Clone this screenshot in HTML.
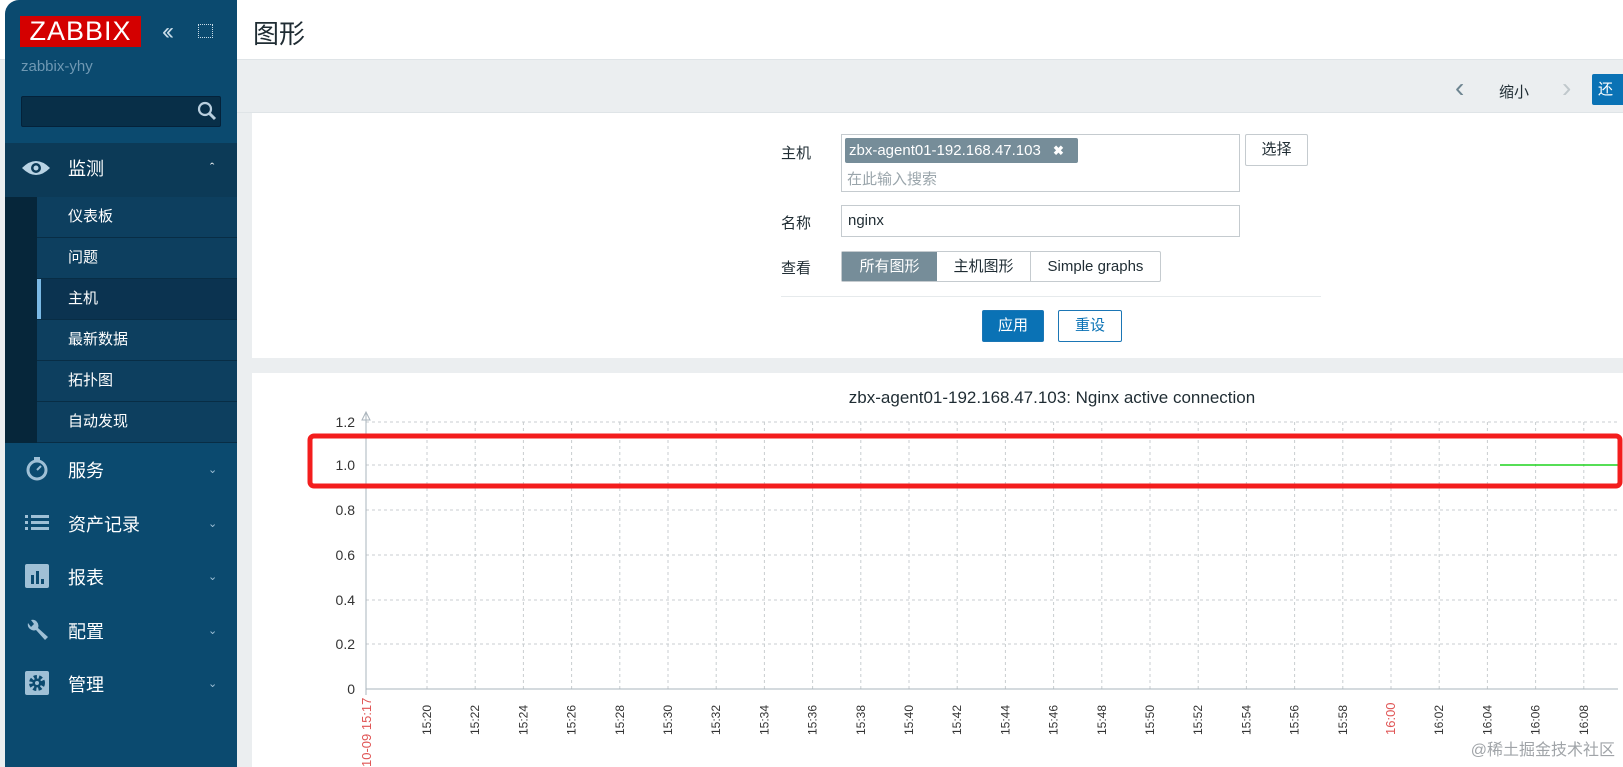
<!DOCTYPE html>
<html><head><meta charset="utf-8"><style>
*{margin:0;padding:0;box-sizing:border-box}
body{width:1623px;height:767px;overflow:hidden;background:#ebeef0;font-family:"Liberation Sans","Noto Sans CJK SC",sans-serif;position:relative;color:#1f2c33}
.a{position:absolute}
#sb{left:5px;top:0;width:232px;height:767px;background:#0b4a6f;border-radius:14px 0 0 0}
.logo{left:20px;top:16px;width:121px;height:31px;background:#d40000;color:#fff;font-size:27px;line-height:31px;text-align:center;letter-spacing:1px}
.sub{left:32px;width:200px;height:41px;background:#0d3f5f;border-bottom:1px solid #082d45;color:#fff;font-size:15px;line-height:40px;padding-left:31px}
.mi{left:68px;color:#fff;font-size:18px}
.chev{left:208px;color:#9fc0d6;font-size:11px}
.lbl{font-size:15px;color:#1f2c33}
.inp{background:#fff;border:1px solid #c5cbcf}
.btn{border:1px solid #1b76b5;border-radius:2px;font-size:15px;text-align:center;line-height:29px}
</style></head><body>
<div class="a" style="left:0;top:0;width:1623px;height:60px;background:#fff;border-bottom:1px solid #dfe4e7"></div>
<div class="a" style="left:253px;top:14px;font-size:26px;color:#1f2c33">图形</div>
<div class="a" style="left:237px;top:112px;width:1386px;height:1px;background:#dfe4e7"></div>
<div class="a" style="left:1455px;top:72px;font-size:28px;color:#6e8591">&#8249;</div>
<div class="a" style="left:1499px;top:81px;font-size:15px">缩小</div>
<div class="a" style="left:1562px;top:72px;font-size:28px;color:#c0c8cc">&#8250;</div>
<div class="a" style="left:1592px;top:74px;width:40px;height:31px;background:#0a72b5;border-radius:2px;color:#fff;font-size:15px;line-height:31px;padding-left:6px">还</div>

<div class="a" style="left:252px;top:113px;width:1371px;height:245px;background:#fff"></div>
<div class="a lbl" style="left:781px;top:142px">主机</div>
<div class="a inp" style="left:841px;top:134px;width:399px;height:58px"></div>
<div class="a" style="left:845px;top:138px;width:233px;height:25px;background:#768d99;border-radius:2px;color:#fff;font-size:15px;line-height:25px;padding-left:4px">zbx-agent01-192.168.47.103 <b style="margin-left:8px;font-size:13px">✖</b></div>
<div class="a" style="left:847px;top:168px;font-size:15px;color:#9aa5ab">在此输入搜索</div>
<div class="a" style="left:1245px;top:134px;width:63px;height:32px;border:1px solid #c5cbcf;border-radius:2px;font-size:15px;text-align:center;line-height:30px">选择</div>
<div class="a lbl" style="left:781px;top:212px">名称</div>
<div class="a inp" style="left:841px;top:205px;width:399px;height:32px;font-size:15px;line-height:30px;padding-left:6px">nginx</div>
<div class="a lbl" style="left:781px;top:257px">查看</div>
<div class="a" style="left:841px;top:251px;width:320px;height:31px;border:1px solid #c5cbcf;border-radius:2px;font-size:15px;line-height:29px">
<span class="a" style="left:0;top:0;width:95px;height:29px;background:#768d99;color:#fff;text-align:center">所有图形</span>
<span class="a" style="left:95px;top:0;width:94px;height:29px;border-right:1px solid #c5cbcf;text-align:center">主机图形</span>
<span class="a" style="left:189px;top:0;width:129px;text-align:center">Simple graphs</span></div>
<div class="a" style="left:781px;top:296px;width:540px;height:1px;background:#e6eaec"></div>
<div class="a btn" style="left:982px;top:310px;width:62px;height:32px;background:#0a72b5;color:#fff">应用</div>
<div class="a btn" style="left:1058px;top:310px;width:64px;height:32px;background:#fff;color:#0a72b5">重设</div>

<div class="a" style="left:252px;top:373px;width:1371px;height:394px;background:#fff"></div>
<svg class="a" style="left:0;top:0" width="1623" height="767">
<text x="1052" y="403" font-size="17" text-anchor="middle" fill="#1f2c33" font-family="Liberation Sans">zbx-agent01-192.168.47.103: Nginx active connection</text>
<g stroke="#c8cdd0" stroke-dasharray="3,3" stroke-width="1">
<line x1="366" y1="422" x2="1618" y2="422"/><line x1="366" y1="465" x2="1618" y2="465"/><line x1="366" y1="510" x2="1618" y2="510"/><line x1="366" y1="555" x2="1618" y2="555"/><line x1="366" y1="600" x2="1618" y2="600"/><line x1="366" y1="644" x2="1618" y2="644"/>
</g>
<g id="vg" stroke="#c8cdd0" stroke-dasharray="3,3"></g>
<line x1="366" y1="412" x2="366" y2="695" stroke="#aab4bc"/>
<path d="M362 420 L366 412 L370 420 Z" fill="none" stroke="#aab4bc"/>
<line x1="366" y1="689" x2="1618" y2="689" stroke="#aab4bc"/>
<g font-size="14" fill="#333" text-anchor="end" font-family="Liberation Sans">
<text x="355" y="427">1.2</text><text x="355" y="470">1.0</text><text x="355" y="515">0.8</text><text x="355" y="560">0.6</text><text x="355" y="605">0.4</text><text x="355" y="649">0.2</text><text x="355" y="694">0</text></g>
<g id="xl" font-size="12" fill="#333" font-family="Liberation Sans"></g>
<text transform="translate(371,767) rotate(-90)" font-size="13" fill="#e05555" font-family="Liberation Sans">10-09 15:17</text>
<line x1="1500" y1="465" x2="1618" y2="465" stroke="#1ed41e" stroke-width="1.5"/>
<rect x="310" y="436" width="1310" height="50" rx="4" fill="none" stroke="#f31d1d" stroke-width="5"/>
<text x="1615" y="755" font-size="16" fill="#a0a4a8" text-anchor="end" font-family="Liberation Sans,Noto Sans CJK SC">@稀土掘金技术社区</text>
</svg>

<div id="sb" class="a"></div>
<div class="a logo">ZABBIX</div>
<div class="a" style="left:162px;top:18px;color:#c9dce8;font-size:24px;letter-spacing:-4px">&lsaquo;&lsaquo;</div>
<div class="a" style="left:198px;top:24px;width:15px;height:14px;border:1px dotted #c9dce8"></div>
<div class="a" style="left:21px;top:58px;color:#6f98b3;font-size:15px">zabbix-yhy</div>
<div class="a" style="left:21px;top:96px;width:200px;height:31px;background:#082f48;border:1px solid #04223a;border-radius:2px"></div>
<svg class="a" style="left:196px;top:100px" width="22" height="22"><circle cx="9" cy="9" r="6" fill="none" stroke="#b9cfde" stroke-width="2.2"/><line x1="13.5" y1="13.5" x2="19" y2="19" stroke="#b9cfde" stroke-width="3"/></svg>
<div class="a" style="left:5px;top:143px;width:232px;height:54px;background:#0c3a57"></div>
<svg class="a" style="left:21px;top:158px" width="30" height="20"><path d="M1 10 Q15 -4 29 10 Q15 24 1 10Z" fill="#b9d3e4"/><circle cx="15" cy="10" r="5" fill="#0c3a57"/><circle cx="15" cy="10" r="2.5" fill="#b9d3e4"/></svg>
<div class="a mi" style="top:155px;left:68px">监测</div>
<div class="a" style="left:210px;top:160px;color:#fff;font-size:13px">&#710;</div>
<div class="a" style="left:5px;top:197px;width:32px;height:246px;background:#06263a"></div>
<div class="a sub" style="top:197px;left:37px">仪表板</div>
<div class="a sub" style="top:238px;left:37px">问题</div>
<div class="a sub" style="top:279px;left:37px;background:#0b3350">主机</div>
<div class="a" style="left:37px;top:279px;width:4px;height:40px;background:#7ab9e5"></div>
<div class="a sub" style="top:320px;left:37px">最新数据</div>
<div class="a sub" style="top:361px;left:37px">拓扑图</div>
<div class="a sub" style="top:402px;left:37px">自动发现</div>

<svg class="a" style="left:25px;top:456px" width="24" height="26"><rect x="9" y="1" width="6" height="3" fill="#9fc0d6"/><circle cx="12" cy="14" r="9" fill="none" stroke="#9fc0d6" stroke-width="3"/><line x1="12" y1="14" x2="16" y2="10" stroke="#9fc0d6" stroke-width="2"/></svg>
<div class="a mi" style="top:457px">服务</div><div class="a chev" style="top:463px">&#8964;</div>
<svg class="a" style="left:25px;top:514px" width="24" height="18" fill="#9fc0d6"><rect x="0" y="1" width="3" height="3"/><rect x="6" y="1" width="18" height="3"/><rect x="0" y="7" width="3" height="3"/><rect x="6" y="7" width="18" height="3"/><rect x="0" y="13" width="3" height="3"/><rect x="6" y="13" width="18" height="3"/></svg>
<div class="a mi" style="top:511px">资产记录</div><div class="a chev" style="top:517px">&#8964;</div>
<svg class="a" style="left:25px;top:564px" width="24" height="24"><rect width="24" height="24" rx="2" fill="#9fc0d6"/><rect x="6" y="11" width="3" height="9" fill="#0b4a6f"/><rect x="11" y="7" width="3" height="13" fill="#0b4a6f"/><rect x="16" y="15" width="3" height="5" fill="#0b4a6f"/></svg>
<div class="a mi" style="top:564px">报表</div><div class="a chev" style="top:570px">&#8964;</div>
<svg class="a" style="left:25px;top:618px" width="24" height="24"><path d="M3 5 A6 6 0 0 0 11 12 L20 22 L23 19 L13 10 A6 6 0 0 0 6 2 L9 6 L6 9 Z" fill="#9fc0d6"/></svg>
<div class="a mi" style="top:618px">配置</div><div class="a chev" style="top:624px">&#8964;</div>
<svg class="a" style="left:25px;top:671px" width="24" height="24"><rect width="24" height="24" rx="2" fill="#9fc0d6"/><circle cx="12" cy="12" r="6" fill="none" stroke="#0b4a6f" stroke-width="4" stroke-dasharray="3,2"/><circle cx="12" cy="12" r="4.5" fill="#0b4a6f"/><circle cx="12" cy="12" r="2" fill="#9fc0d6"/></svg>
<div class="a mi" style="top:671px">管理</div><div class="a chev" style="top:677px">&#8964;</div>

<script>
var vg=document.getElementById('vg'),xl=document.getElementById('xl'),ns='http://www.w3.org/2000/svg';
var labels=['15:20','15:22','15:24','15:26','15:28','15:30','15:32','15:34','15:36','15:38','15:40','15:42','15:44','15:46','15:48','15:50','15:52','15:54','15:56','15:58','16:00','16:02','16:04','16:06','16:08'];
labels.forEach(function(l,i){var x=427+i*48.2;
var ln=document.createElementNS(ns,'line');ln.setAttribute('x1',x);ln.setAttribute('x2',x);ln.setAttribute('y1',422);ln.setAttribute('y2',689);vg.appendChild(ln);
var t=document.createElementNS(ns,'text');t.setAttribute('transform','translate('+(x+4)+',735) rotate(-90)');t.textContent=l;if(l=='16:00'){t.setAttribute('fill','#e05555');t.setAttribute('font-size','13');}xl.appendChild(t);});
</script>
</body></html>
